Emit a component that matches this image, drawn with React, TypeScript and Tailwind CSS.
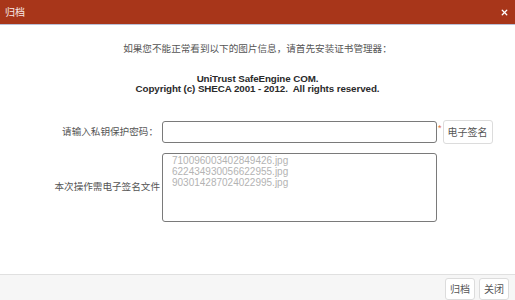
import { X } from 'lucide-react';

const files = ['710096003402849426.jpg', '622434930056622955.jpg', '903014287024022995.jpg'];

export default function App() {
  return (
    <div className="w-[515px] h-[300px] flex flex-col bg-white font-['Liberation_Sans','Noto_Sans_CJK_SC',sans-serif] overflow-hidden">
      {/* title bar */}
      <div className="h-[25px] shrink-0 flex items-center justify-between pl-[5px] pr-[6px] bg-[#a8361a] border-b border-[#b9bfd6]">
        <span className="text-[10px] text-white/90">归档</span>
        <X className="w-[9px] h-[9px] text-white" strokeWidth={3.5} />
      </div>

      <div className="flex-1 flex flex-col">
        <p className="mt-[17px] text-center text-[9.6px] leading-[14px] text-[#555]">
          如果您不能正常看到以下的图片信息，请首先安装证书管理器：
        </p>

        <div className="mt-[18px] text-center text-[9.8px] leading-[10px] font-bold text-[#2a2a2a] tracking-[-0.1px]">
          <div>UniTrust SafeEngine COM.</div>
          <div>Copyright (c) SHECA 2001 - 2012.&nbsp; All rights reserved.</div>
        </div>

        <div className="mt-[26px] flex items-center">
          <label className="w-[160px] text-right pr-[2px] text-[9.6px] text-[#555]">请输入私钥保护密码：</label>
          <input
            type="password"
            className="ml-[2px] w-[275px] h-[22px] border border-[#7a7a7a] rounded-[3px] outline-none"
          />
          <span className="self-start mt-[4px] ml-[1px] text-[9px] leading-none text-[#e0703a]">*</span>
          <button className="ml-[1px] h-[24px] px-[4px] border border-[#dcdcdc] rounded-[3px] bg-white text-[10px] text-[#555]">
            电子签名
          </button>
        </div>

        <div className="mt-[9px] flex items-center">
          <label className="w-[160px] text-right text-[9.6px] text-[#555]">本次操作需电子签名文件</label>
          <div className="ml-[2px] w-[275px] h-[69px] border border-[#7a7a7a] rounded-[3px] px-[9px] pt-[1px] text-[10px] leading-[11px] text-[#b3b3b3]">
            {files.map((f) => (
              <div key={f}>{f}</div>
            ))}
          </div>
        </div>
      </div>

      {/* footer */}
      <div className="h-[26px] shrink-0 flex items-center justify-end gap-[4px] pr-[6px] bg-[#f6f6f6] border-t border-[#e0e0e0]">
        <button className="h-[22px] px-[4px] mt-[3px] border border-[#dcdcdc] rounded-[3px] bg-white text-[10px] text-[#555]">归档</button>
        <button className="h-[22px] px-[4px] mt-[3px] border border-[#dcdcdc] rounded-[3px] bg-white text-[10px] text-[#555]">关闭</button>
      </div>
    </div>
  );
}
